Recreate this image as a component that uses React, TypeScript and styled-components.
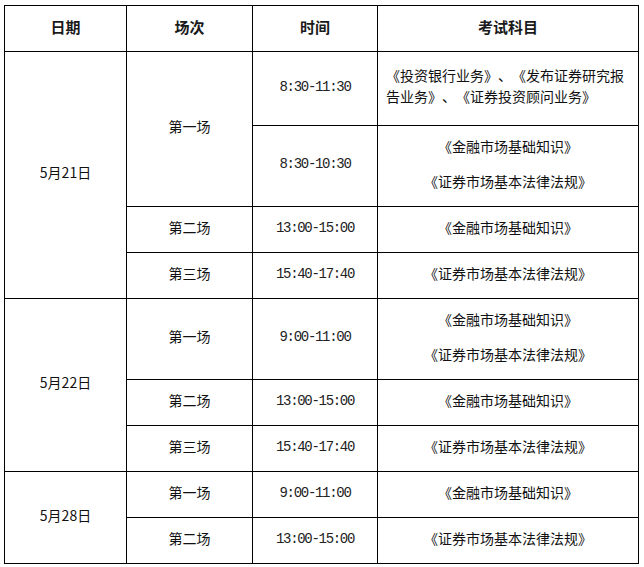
import React from "react";
import styled, { createGlobalStyle } from "styled-components";

const GlobalStyle = createGlobalStyle`
  html, body {
    margin: 0;
    padding: 0;
    background: #fff;
  }
  body {
    font-family: "Noto Sans CJK SC", "Liberation Sans", sans-serif;
    color: #000;
  }
`;

const Page = styled.div`
  padding: 5px 0 0 4px;
  width: 644px;
  box-sizing: border-box;
`;

const Table = styled.table`
  border-collapse: collapse;
  table-layout: fixed;
  width: 634px;
  font-size: 14px;
  line-height: 21px;
  text-spacing-trim: space-all;
`;

type RowProps = { $h: number };

const Row = styled.tr<RowProps>`
  height: ${(props) => `${props.$h}px`};
`;

const Cell = styled.td`
  border: 1px solid #000;
  padding: 0 8px 5px;
  text-align: center;
  vertical-align: middle;
  color: #111;
  text-spacing-trim: space-all;
`;

const HeadCell = styled(Cell).attrs({ as: "th" })`
  font-size: 15px;
  font-weight: 700;
  color: #1a1a1a;
`;

const TimeCell = styled(Cell)`
  font-family: "Liberation Mono", "DejaVu Sans Mono", monospace;
  letter-spacing: -1.3px;
  color: #222;
  padding-bottom: 3px;
`;

const WrapCell = styled(Cell)`
  text-align: left;
`;

const Para = styled.p`
  margin: 0;

  & + & {
    margin-top: 14px;
  }
`;

const FINANCE = "《金融市场基础知识》";
const LAW = "《证券市场基本法律法规》";

export default function App() {
  return (
    <>
      <GlobalStyle />
      <Page>
        <Table>
          <colgroup>
            <col style={{ width: 122 }} />
            <col style={{ width: 126 }} />
            <col style={{ width: 125 }} />
            <col style={{ width: 261 }} />
          </colgroup>
          <tbody>
            <Row $h={46}>
              <HeadCell>日期</HeadCell>
              <HeadCell>场次</HeadCell>
              <HeadCell>时间</HeadCell>
              <HeadCell>考试科目</HeadCell>
            </Row>

            <Row $h={74}>
              <Cell rowSpan={4}>5月21日</Cell>
              <Cell rowSpan={2}>第一场</Cell>
              <TimeCell>8:30-11:30</TimeCell>
              <WrapCell>
                《投资银行业务》、《发布证券研究报告业务》、《证券投资顾问业务》
              </WrapCell>
            </Row>
            <Row $h={81}>
              <TimeCell>8:30-10:30</TimeCell>
              <Cell>
                <Para>{FINANCE}</Para>
                <Para>{LAW}</Para>
              </Cell>
            </Row>
            <Row $h={46}>
              <Cell>第二场</Cell>
              <TimeCell>13:00-15:00</TimeCell>
              <Cell>{FINANCE}</Cell>
            </Row>
            <Row $h={46}>
              <Cell>第三场</Cell>
              <TimeCell>15:40-17:40</TimeCell>
              <Cell>{LAW}</Cell>
            </Row>

            <Row $h={81}>
              <Cell rowSpan={3}>5月22日</Cell>
              <Cell>第一场</Cell>
              <TimeCell>9:00-11:00</TimeCell>
              <Cell>
                <Para>{FINANCE}</Para>
                <Para>{LAW}</Para>
              </Cell>
            </Row>
            <Row $h={46}>
              <Cell>第二场</Cell>
              <TimeCell>13:00-15:00</TimeCell>
              <Cell>{FINANCE}</Cell>
            </Row>
            <Row $h={46}>
              <Cell>第三场</Cell>
              <TimeCell>15:40-17:40</TimeCell>
              <Cell>{LAW}</Cell>
            </Row>

            <Row $h={46}>
              <Cell rowSpan={2}>5月28日</Cell>
              <Cell>第一场</Cell>
              <TimeCell>9:00-11:00</TimeCell>
              <Cell>{FINANCE}</Cell>
            </Row>
            <Row $h={46}>
              <Cell>第二场</Cell>
              <TimeCell>13:00-15:00</TimeCell>
              <Cell>{LAW}</Cell>
            </Row>
          </tbody>
        </Table>
      </Page>
    </>
  );
}
